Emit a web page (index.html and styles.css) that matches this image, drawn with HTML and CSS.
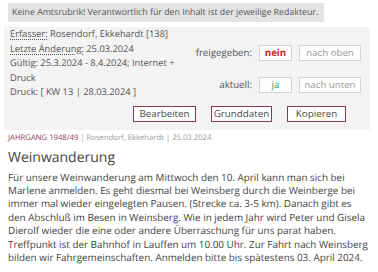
FILE: index.html
```html
<!DOCTYPE html>
<html lang="de">

<head>
    <meta charset="utf-8">
    <meta name="viewport" content="width=device-width, initial-scale=1.0">
    <title>Weinwanderung</title>
    <link rel="stylesheet" href="styles.css">
</head>

<body>
    <div class="hinweis">Keine Amtsrubrik! Verantwortlich für den Inhalt ist der jeweilige Redakteur.</div>

    <div class="infobox">
        <div class="infoteil">
            <div class="daten">
                <p><abbr>Erfasser:</abbr> Rosendorf, Ekkehardt [138]</p>
                <p><abbr>Letzte Änderung:</abbr> 25.03.2024</p>
                <p>Gültig: 25.3.2024 - 8.4.2024; Internet + Druck</p>
                <p>Druck: [ KW 13 | 28.03.2024 ]</p>
            </div>
            <div class="status">
                <span class="label">freigegeben:</span>
                <span class="wert nein">nein</span>
                <button class="schieben">nach oben</button>
                <span class="label">aktuell:</span>
                <span class="wert ja">ja</span>
                <button class="schieben">nach unten</button>
            </div>
        </div>
        <div class="aktionen">
            <button class="aktion bearbeiten">Bearbeiten</button>
            <button class="aktion grunddaten">Grunddaten</button>
            <button class="aktion kopieren">Kopieren</button>
        </div>
    </div>

    <article class="artikel">
        <div class="meta"><span class="rubrik">JAHRGANG 1948/49</span> | Rosendorf, Ekkehardt | 25.03.2024</div>
        <h2>Weinwanderung</h2>
        <p>Für unsere Weinwanderung am Mittwoch den 10. April kann man sich bei<br>
            Marlene anmelden. Es geht diesmal bei Weinsberg durch die Weinberge bei<br>
            immer mal wieder eingelegten Pausen. (Strecke ca. 3-5 km). Danach gibt es<br>
            den Abschluß im Besen in Weinsberg. Wie in jedem Jahr wird Peter und Gisela<br>
            Dierolf wieder die eine oder andere Überraschung für uns parat haben.<br>
            Treffpunkt ist der Bahnhof in Lauffen um 10.00 Uhr. Zur Fahrt nach Weinsberg<br>
            bilden wir Fahrgemeinschaften. Anmelden bitte bis spätestens 03. April 2024.</p>
    </article>
</body>

</html>
```

FILE: styles.css
```css
body {
    margin: 0;
    font-family: "Open Sans", "DejaVu Sans", sans-serif;
    color: #444;
    background: #fff;
    text-rendering: geometricPrecision;
}

.hinweis {
    width: fit-content;
    margin: 3px 0 0 8px;
    padding: 3px 6px 3px 4px;
    background: #e3e3e3;
    font-size: 8.8px;
    line-height: 13px;
    color: #555;
    white-space: nowrap;
}

.infobox {
    margin: 5px 8px 0 4px;
    padding: 0 9px 8px 6px;
    background: #f3f3f3;
}

.infoteil {
    display: flex;
}

.daten {
    width: 176px;
    font-size: 9.3px;
    line-height: 14.5px;
    color: #555;
}

.daten p {
    margin: 0;
}

abbr {
    text-decoration: underline dotted;
    text-underline-offset: 2px;
}

.status {
    flex: 1;
    display: grid;
    grid-template-columns: 1fr auto auto;
    gap: 3px 7px;
    align-items: center;
    margin-top: 11px;
    font-size: 9.7px;
}

.label {
    text-align: right;
    color: #555;
}

.wert {
    width: 31px;
    height: 14px;
    line-height: 14px;
    text-align: center;
    background: #fff;
    border: 1px solid #d3d3d3;
}

.nein {
    color: #c0282d;
    font-weight: 700;
}

.ja {
    color: #3b9a5c;
}

.schieben {
    width: 62px;
    height: 16px;
    padding: 0;
    font-family: inherit;
    font-size: 9.7px;
    color: #999;
    background: #fff;
    border: 1px solid #d3d3d3;
}

.aktionen {
    display: flex;
    justify-content: flex-end;
    gap: 15px;
    margin-top: 6px;
    padding-right: 15px;
}

.aktion {
    height: 16px;
    padding: 0;
    font-family: inherit;
    font-size: 9.8px;
    color: #444;
    background: #fff;
    border: 1px solid #8a3a4c;
}

.bearbeiten {
    width: 63px;
}

.grunddaten {
    width: 61px;
}

.kopieren {
    width: 59px;
}

.artikel {
    margin: 3px 2px 0 8px;
}

.meta {
    font-size: 7.7px;
    line-height: 11px;
    color: #999;
}

.rubrik {
    color: #8d3b55;
}

h2 {
    margin: 4px 0 4px;
    font-size: 14px;
    line-height: 19px;
    font-weight: 400;
    color: #444;
}

.artikel p {
    margin: 0;
    font-size: 9.9px;
    line-height: 13.4px;
    color: #444;
    white-space: nowrap;
}
```
